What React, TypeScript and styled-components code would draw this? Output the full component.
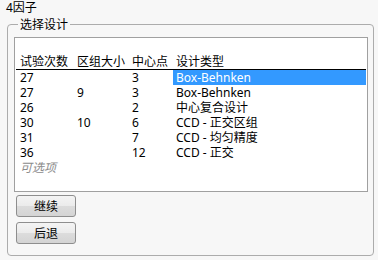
import React from "react";
import styled, { createGlobalStyle } from "styled-components";

const Global = createGlobalStyle`
  html, body { margin: 0; padding: 0; background: #f7f7f7; }
  body {
    font-family: "Noto Sans", "Noto Sans CJK SC", sans-serif;
    font-size: 12px;
    color: #000;
  }
`;

const Page = styled.div`
  width: 378px;
  height: 260px;
  display: flex;
  flex-direction: column;
  box-sizing: border-box;
`;

const Title = styled.div`
  line-height: 15px;
  padding: 0 0 0 6px;
  height: 15px;
`;

const Group = styled.fieldset`
  margin: 2px 0 0 7px;
  width: 367px;
  box-sizing: border-box;
  border: 1px solid #acacac;
  border-radius: 4px;
  padding: 5px 5px 10px 6px;
  display: flex;
  flex-direction: column;
  min-width: 0;
  height: 239px;
`;

const Legend = styled.legend`
  margin-left: 4px;
  padding: 0 2px;
  line-height: 15px;
`;

const ListBox = styled.div`
  height: 155px;
  box-sizing: border-box;
  border: 1px solid #a0a0a0;
  background: #fff;
  padding: 16px 1px 0 1px;
`;

const Row = styled.div<{ $header?: boolean }>`
  display: grid;
  grid-template-columns: 57px 55px 41px 1fr;
  padding-left: 4px;
  height: ${(p) => (p.$header ? "15px" : "15px")};
  line-height: 15px;
  border-bottom: ${(p) => (p.$header ? "1px solid #000" : "none")};
  white-space: nowrap;
`;

const Cell = styled.span``;

const TypeCell = styled.span<{ $selected?: boolean }>`
  padding-left: 3px;
  background: ${(p) => (p.$selected ? "#3399ff" : "transparent")};
  color: ${(p) => (p.$selected ? "#fff" : "#000")};
`;

const Hint = styled.div`
  padding-left: 4px;
  line-height: 15px;
  color: #8c8c8c;
  font-style: italic;
`;

const Buttons = styled.div`
  display: flex;
  flex-direction: column;
  gap: 5px;
  margin: 3px 0 0 2px;
`;

const Button = styled.button`
  width: 60px;
  height: 22px;
  box-sizing: border-box;
  border: 1px solid #8e8e8e;
  border-radius: 3px;
  background: linear-gradient(#f4f4f4 0%, #ebebeb 50%, #dcdcdc 51%, #d4d4d4 100%);
  font-family: "Noto Sans CJK SC", sans-serif;
  font-size: 12px;
  line-height: 18px;
  padding: 0;
  color: #000;
`;

const rows = [
  { runs: "27", block: "", center: "3", type: "Box-Behnken", selected: true },
  { runs: "27", block: "9", center: "3", type: "Box-Behnken" },
  { runs: "26", block: "", center: "2", type: "中心复合设计" },
  { runs: "30", block: "10", center: "6", type: "CCD - 正交区组" },
  { runs: "31", block: "", center: "7", type: "CCD - 均匀精度" },
  { runs: "36", block: "", center: "12", type: "CCD - 正交" },
];

export default function App() {
  return (
    <Page>
      <Global />
      <Title>4因子</Title>
      <Group>
        <Legend>选择设计</Legend>
        <ListBox>
          <Row $header>
            <Cell>试验次数</Cell>
            <Cell>区组大小</Cell>
            <Cell>中心点</Cell>
            <TypeCell>设计类型</TypeCell>
          </Row>
          {rows.map((r, i) => (
            <Row key={i}>
              <Cell>{r.runs}</Cell>
              <Cell>{r.block}</Cell>
              <Cell>{r.center}</Cell>
              <TypeCell $selected={r.selected}>{r.type}</TypeCell>
            </Row>
          ))}
          <Hint>可选项</Hint>
        </ListBox>
        <Buttons>
          <Button>继续</Button>
          <Button>后退</Button>
        </Buttons>
      </Group>
    </Page>
  );
}
